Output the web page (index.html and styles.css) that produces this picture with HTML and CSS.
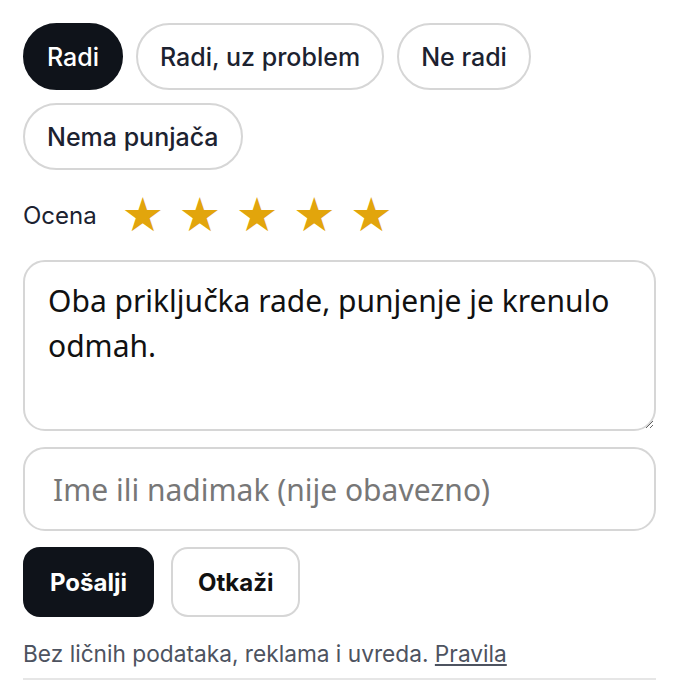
FILE: index.html
```html
<!DOCTYPE html>
<html lang="sr">
<head>
    <meta charset="UTF-8">
    <meta name="viewport" content="width=device-width, initial-scale=1.0">
    <title>Prijava stanja</title>
    <link rel="stylesheet" href="styles.css">
</head>
<body>
    <div class="forma">
        <div class="cipovi">
            <button class="cip aktivan">Radi</button>
            <button class="cip">Radi, uz problem</button>
            <button class="cip">Ne radi</button>
            <button class="cip">Nema punjača</button>
        </div>

        <div class="ocena">
            <span class="ocena-naziv">Ocena</span>
            <div class="zvezde">
                <span class="zvezda">★</span>
                <span class="zvezda">★</span>
                <span class="zvezda">★</span>
                <span class="zvezda">★</span>
                <span class="zvezda">★</span>
            </div>
        </div>

        <textarea class="komentar">Oba priključka rade, punjenje je krenulo odmah.</textarea>

        <input class="ime" type="text" placeholder="Ime ili nadimak (nije obavezno)">

        <div class="akcije">
            <button class="dugme glavno">Pošalji</button>
            <button class="dugme">Otkaži</button>
        </div>

        <p class="napomena">Bez ličnih podataka, reklama i uvreda. <a href="#">Pravila</a></p>
    </div>
</body>
</html>
```

FILE: styles.css
```css
body {
    margin: 0;
    font-family: Inter, "Noto Sans", sans-serif;
    background: #fff;
    color: #141820;
}

.forma {
    padding: 23px 24px 0 23px;
}

.cipovi {
    display: flex;
    flex-wrap: wrap;
    gap: 13px;
}

.cip {
    font-family: Inter, sans-serif;
    font-size: 25px;
    font-weight: 550;
    color: #1c2230;
    background: #fff;
    border: 2px solid #d6d6d6;
    border-radius: 34px;
    height: 67px;
    padding: 0 22px;
}

.cip.aktivan {
    background: #0f131a;
    border-color: #0f131a;
    color: #fff;
}

.ocena {
    display: flex;
    align-items: center;
    margin-top: 24px;
    height: 42px;
}

.ocena-naziv {
    font-size: 24px;
    color: #1c2230;
    margin-right: 25px;
}

.zvezde {
    display: flex;
    gap: 15px;
}

.zvezda {
    color: #e2a50c;
    font-size: 47px;
    line-height: 42px;
    font-family: "DejaVu Sans", sans-serif;
}

.komentar {
    display: block;
    box-sizing: border-box;
    width: 100%;
    height: 171px;
    margin-top: 24px;
    padding: 16px 23px;
    font-family: "Noto Sans", sans-serif;
    font-size: 30px;
    line-height: 45px;
    color: #111;
    border: 2px solid #d6d6d6;
    border-radius: 22px;
    resize: vertical;
}

.ime {
    display: block;
    box-sizing: border-box;
    width: 100%;
    height: 84px;
    margin-top: 16px;
    padding: 0 28px;
    font-family: "Noto Sans", sans-serif;
    font-size: 30px;
    color: #111;
    border: 2px solid #d6d6d6;
    border-radius: 22px;
}

.ime::placeholder {
    color: #777;
}

.akcije {
    display: flex;
    gap: 17px;
    margin-top: 16px;
}

.dugme {
    font-family: Inter, sans-serif;
    font-size: 24px;
    font-weight: 700;
    height: 70px;
    padding: 0 25px;
    background: #fff;
    color: #111;
    border: 2px solid #d6d6d6;
    border-radius: 17px;
}

.dugme.glavno {
    background: #0f131a;
    border-color: #0f131a;
    color: #fff;
}

.napomena {
    margin: 23px 0 0;
    padding-bottom: 11px;
    border-bottom: 2px solid #e6e6e6;
    font-size: 22.7px;
    color: #4d5360;
}

.napomena a {
    color: #4d5360;
}
```
